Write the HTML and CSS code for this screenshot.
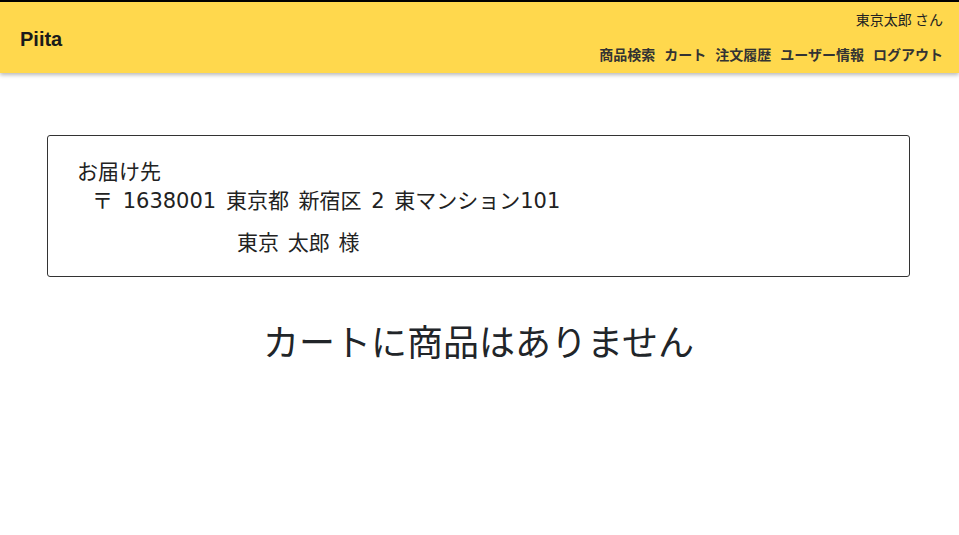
FILE: index.html
```html
<!DOCTYPE html>
<html lang="ja">
<head>
<meta charset="utf-8">
<title>Piita</title>
<link rel="stylesheet" href="styles.css">
</head>
<body>
<header class="navbar">
  <div class="brand">Piita</div>
  <div class="nav-right">
    <div class="user">東京太郎 さん</div>
    <nav class="links">
      <a href="#">商品検索</a>
      <a href="#">カート</a>
      <a href="#">注文履歴</a>
      <a href="#">ユーザー情報</a>
      <a href="#">ログアウト</a>
    </nav>
  </div>
</header>
<main class="content">
  <section class="address-box">
    <div class="addr-title">お届け先</div>
    <div class="addr-line">〒 1638001 東京都 新宿区 2 東マンション101</div>
    <div class="addr-name">東京 太郎 様</div>
  </section>
  <h1 class="empty">カートに商品はありません</h1>
</main>
</body>
</html>
```
FILE: styles.css
```css
html, body {
  margin: 0;
  padding: 0;
  background: #fff;
}
body {
  font-family: "Noto Sans CJK JP", "Noto Sans", sans-serif;
  color: #222;
}
.navbar {
  border-top: 2px solid #000;
  height: 71px;
  background: #ffd84d;
  box-shadow: 0 2px 4px rgba(0, 0, 0, 0.28);
  display: flex;
  justify-content: space-between;
  align-items: stretch;
  padding: 0 16px 0 20px;
  box-sizing: content-box;
}
.brand {
  font-family: "Liberation Sans", "Noto Sans CJK JP", sans-serif;
  font-weight: bold;
  font-size: 20px;
  color: #1a1a1a;
  align-self: center;
  margin-top: 4px;
}
.nav-right {
  display: flex;
  flex-direction: column;
  align-items: flex-end;
}
.user {
  font-size: 14px;
  line-height: 20px;
  margin-top: 7px;
  color: #222;
}
.links {
  display: flex;
  gap: 9px;
  margin-top: 15px;
}
.links a {
  font-size: 14px;
  line-height: 20px;
  font-weight: bold;
  color: #333;
  text-decoration: none;
}
.content {
  margin: 62px 49px 0 47px;
}
.address-box {
  border: 1px solid #333;
  border-radius: 3px;
  padding: 20px 29px 12px 29px;
}
.addr-title {
  font-size: 21px;
  line-height: 28px;
}
.addr-line {
  font-family: "DejaVu Sans", "Noto Sans CJK JP", sans-serif;
  font-size: 21px;
  line-height: 35px;
  padding-left: 15px;
  word-spacing: 3px;
}
.addr-name {
  font-size: 21px;
  line-height: 45px;
  padding-left: 160px;
  word-spacing: 4px;
}
.empty {
  margin: 38px 0 0 0;
  text-align: center;
  font-size: 36px;
  line-height: 50px;
  font-weight: normal;
  color: #212529;
}
```
